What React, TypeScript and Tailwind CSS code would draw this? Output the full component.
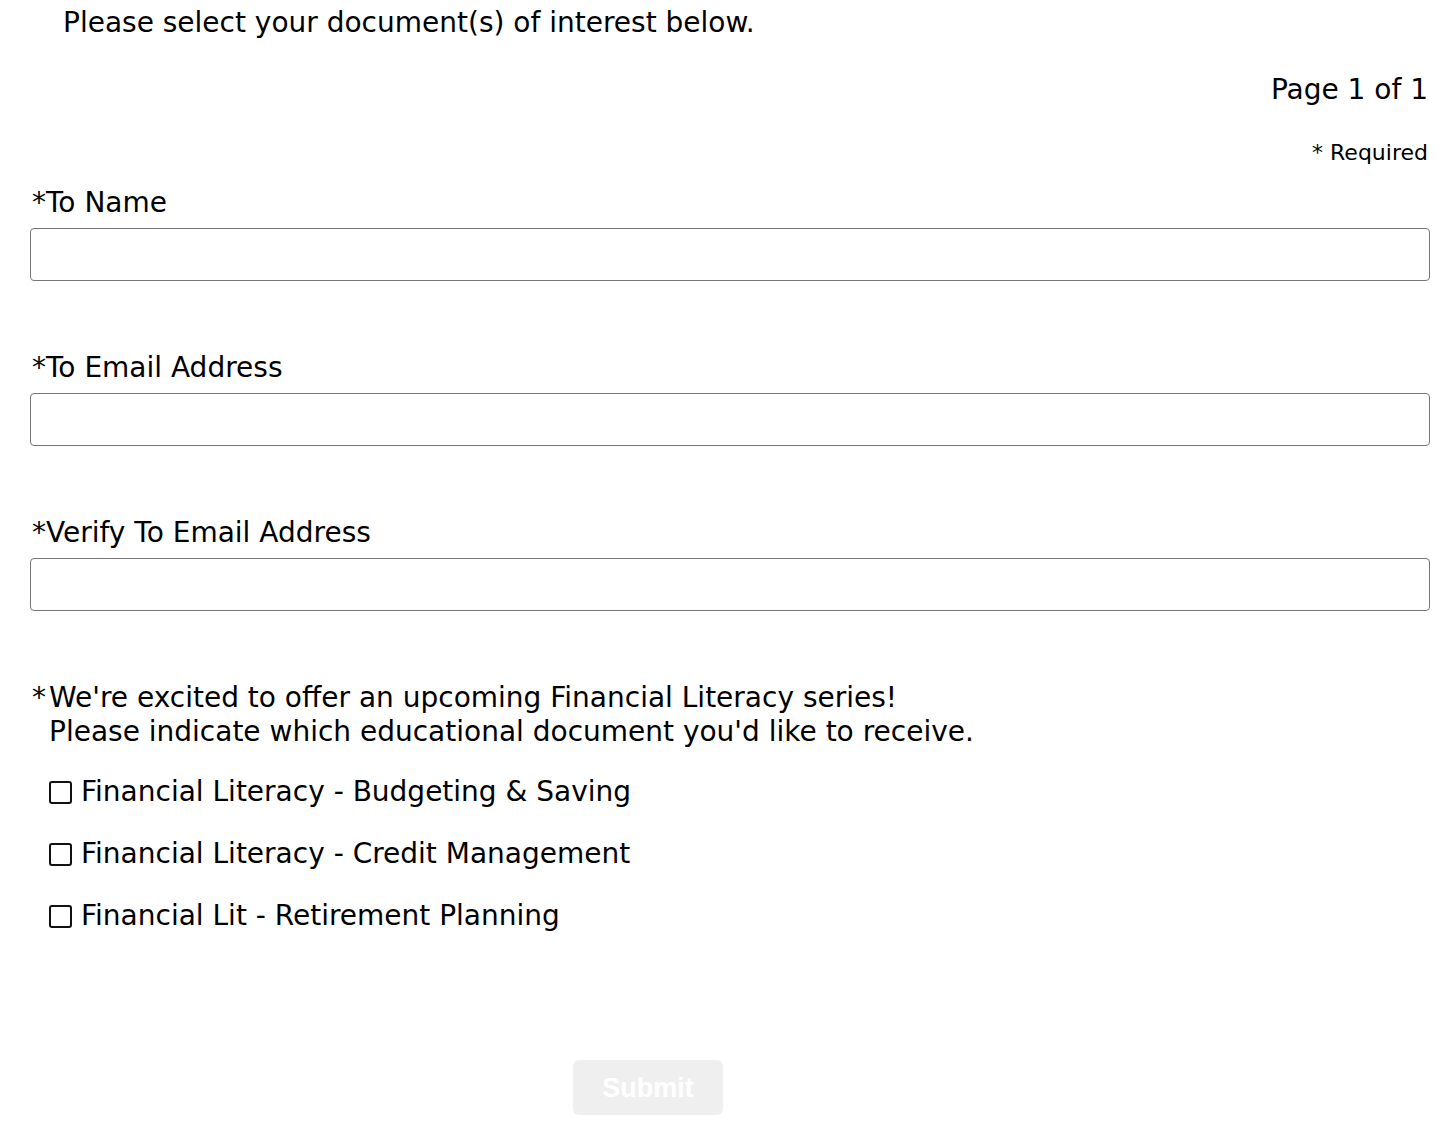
import { useState } from "react";

const Fields = [
  { id: "toName", label: "To Name", type: "text" },
  { id: "toEmail", label: "To Email Address", type: "email" },
  { id: "verifyEmail", label: "Verify To Email Address", type: "email" },
];

const Documents = [
  "Financial Literacy - Budgeting & Saving",
  "Financial Literacy - Credit Management",
  "Financial Lit - Retirement Planning",
];

export default function App() {
  const [values, setValues] = useState<Record<string, string>>({});
  const [picked, setPicked] = useState<string[]>([]);

  function toggle(doc: string) {
    setPicked((p) => (p.includes(doc) ? p.filter((d) => d !== doc) : [...p, doc]));
  }

  return (
    <div className="min-h-screen bg-white text-black text-[28px] leading-[34px] font-['DejaVu_Sans',Verdana,sans-serif]">
      <p className="pt-[6px] pl-[63px]">Please select your document(s) of interest below.</p>

      <p className="mt-[33px] pr-[24px] text-right">Page 1 of 1</p>
      <p className="mt-[32px] pr-[24px] text-right text-[22px] leading-[28px]">* Required</p>

      <form className="pl-[30px] pr-[22px] pt-[19px]" onSubmit={(e) => e.preventDefault()}>
        {Fields.map((f, i) => (
          <div key={f.id} className={i > 0 ? "mt-[70px]" : ""}>
            <label htmlFor={f.id} className="block pl-[2px]">
              *{f.label}
            </label>
            <input
              id={f.id}
              type={f.type}
              value={values[f.id] ?? ""}
              onChange={(e) => setValues({ ...values, [f.id]: e.target.value })}
              className="mt-[8px] block w-full h-[53px] border-[1.5px] border-[#767676] rounded-[4px] px-2 outline-none"
            />
          </div>
        ))}

        {/* Document choice */}
        <div className="mt-[70px] flex pl-[2px]">
          <span className="w-[17px] shrink-0">*</span>
          <div>
            <p>We're excited to offer an upcoming Financial Literacy series!</p>
            <p>Please indicate which educational document you'd like to receive.</p>
          </div>
        </div>

        <div className="mt-[26px] flex flex-col gap-[28px] pl-[19px]">
          {Documents.map((doc) => (
            <label key={doc} className="flex items-center gap-[9px] cursor-pointer">
              <span
                onClick={() => toggle(doc)}
                className="w-[23px] h-[23px] shrink-0 border-[2.5px] border-[#111] rounded-[3px] flex items-center justify-center text-[16px]"
              >
                {picked.includes(doc) ? "✓" : ""}
              </span>
              <span>{doc}</span>
            </label>
          ))}
        </div>

        <button
          type="submit"
          disabled
          className="mt-[127px] ml-[543px] w-[150px] h-[55px] rounded-[6px] bg-[#efefef] text-white font-bold text-[27px] font-['Liberation_Sans',Arial,sans-serif]"
        >
          Submit
        </button>
      </form>
    </div>
  );
}
